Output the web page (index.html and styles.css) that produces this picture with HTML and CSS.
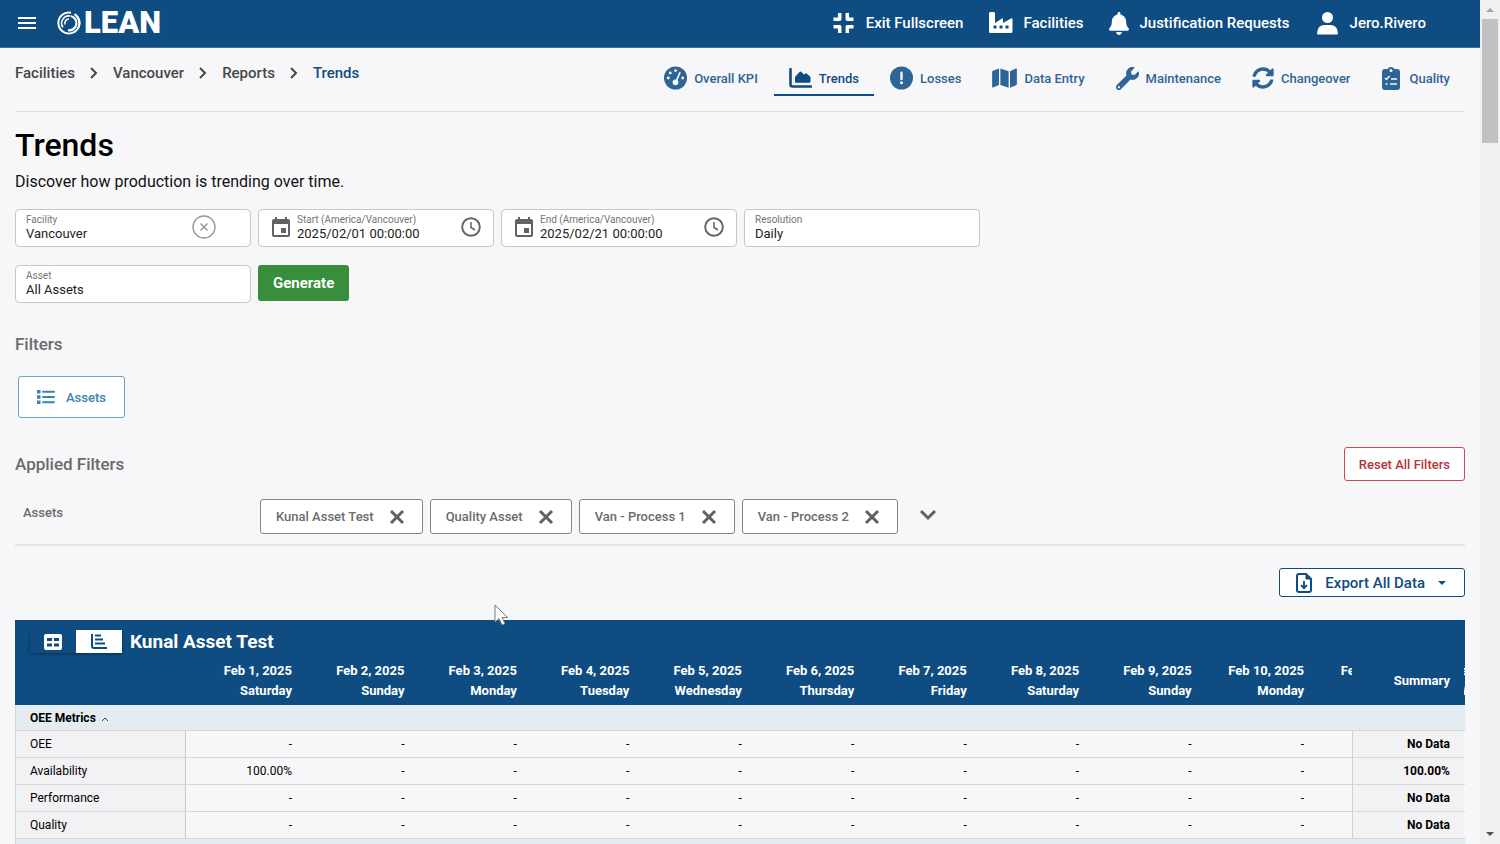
FILE: index.html
```
<!DOCTYPE html>
<html lang="en">
<head>
    <meta charset="UTF-8">
    <meta name="viewport" content="width=device-width, initial-scale=1.0">
    <title>Trends</title>
    <link rel="stylesheet" href="styles.css">
</head>
<body>
    <div class="app">
        <div class="page">
            <header class="topbar">
                <button class="menu-btn" aria-label="Menu">
                    <svg width="18" height="14" viewBox="0 0 18 14"><path d="M0 2h18M0 7h18M0 12h18" stroke="#fff" stroke-width="2"/></svg>
                </button>
                <a class="logo" href="#">
                    <svg width="24" height="24" viewBox="0 0 24 24" fill="none" stroke="#fff">
                        <path d="M14 1.700A10.500 10.500 0 1 0 20.500 6" stroke-width="2"/>
                        <path d="M17.500 3.200A10.500 10.500 0 0 1 21 17.500" stroke-width="2"/>
                        <path d="M13 5A7.200 7.200 0 0 0 6 16.300" stroke-width="1.600"/>
                        <path d="M13.500 5A7.200 7.200 0 0 1 11 19.200" stroke-width="2.200"/>
                        <path d="M8 13.500A4.200 4.200 0 0 1 12 8" stroke-width="1.600"/>
                    </svg>
                    <span>LEAN</span>
                </a>
                <nav class="top-nav">
                    <a href="#">
                        <svg width="24" height="22" viewBox="0 0 24 22" fill="none" stroke="#fff" stroke-width="3.500" stroke-linejoin="round"><path d="M1.500 7.300h6.200V1M21.500 7.300h-6.200V1M1.500 14.700h6.200V21M21.500 14.700h-6.200V21"/></svg>
                        Exit Fullscreen
                    </a>
                    <a href="#">
                        <svg width="24" height="22" viewBox="0 0 24 22"><path fill="#fff" fill-rule="evenodd" d="M1.500 0h3Q6 0 6 1.500V11l7-4.500q1-.5 1 .5v4l8-4.500q1.500-.7 1.500.7V19.500q0 1.500-1.500 1.500h-20.500Q0 21 0 19.500v-18Q0 0 1.500 0zM4.500 13.500v3h3v-3zm6 0v3h3v-3zm6 0v3h3v-3z"/></svg>
                        Facilities
                    </a>
                    <a href="#">
                        <svg width="20" height="23" viewBox="0 0 448 512"><path fill="#fff" d="M224 512c35.320 0 63.970-28.650 63.970-64H160.030c0 35.350 28.650 64 63.970 64zm215.390-149.710c-19.320-20.760-55.470-51.990-55.470-154.290 0-77.700-54.480-139.900-127.940-155.160V32c0-17.670-14.320-32-31.980-32s-31.980 14.330-31.980 32v20.840C118.560 68.100 64.080 130.300 64.080 208c0 102.300-36.150 133.530-55.470 154.290-6 6.450-8.660 14.160-8.610 21.710.11 16.400 12.980 32 32.100 32h383.800c19.120 0 32-15.600 32.100-32 .05-7.550-2.610-15.270-8.610-21.710z"/></svg>
                        Justification Requests
                    </a>
                    <a href="#">
                        <svg width="24" height="24" viewBox="0 0 24 24" fill="#fff"><circle cx="11.500" cy="6.500" r="5.500"/><path d="M1.200 23v-1.500Q1.700 14 8.500 14h6q6.800 0 7.300 7.500V23q0 .5-.5.500H1.700q-.5 0-.5-.5z"/></svg>
                        Jero.Rivero
                    </a>
                </nav>
            </header>

            <main class="content">
                <div class="subheader">
                    <nav class="breadcrumb" aria-label="Breadcrumb">
                        <a href="#">Facilities</a>
                        <svg width="8" height="12" viewBox="0 0 8 12"><path d="M1 1l5 5-5 5"/></svg>
                        <a href="#">Vancouver</a>
                        <svg width="8" height="12" viewBox="0 0 8 12"><path d="M1 1l5 5-5 5"/></svg>
                        <a href="#">Reports</a>
                        <svg width="8" height="12" viewBox="0 0 8 12"><path d="M1 1l5 5-5 5"/></svg>
                        <a href="#" class="current">Trends</a>
                    </nav>
                    <nav class="tabs">
                        <a href="#">
                            <svg width="23" height="24" viewBox="0 0 24 24"><circle cx="12" cy="12" r="12" fill="#2e6596"/><g fill="#f7f6f9"><circle cx="4.500" cy="12" r="1.500"/><circle cx="6.500" cy="6.700" r="1.500"/><circle cx="12" cy="4.300" r="1.500"/><circle cx="19.500" cy="12" r="1.500"/><circle cx="12" cy="16.500" r="3"/></g><path d="M12.500 16L16.500 6.500" stroke="#f7f6f9" stroke-width="1.800" stroke-linecap="round"/></svg>
                            Overall KPI
                        </a>
                        <a href="#" class="active">
                            <svg width="23" height="20" viewBox="0 0 23 20"><path d="M1.500 1v15.500q0 2 2 2H22" fill="none" stroke="#0f4c81" stroke-width="2.600" stroke-linecap="round"/><path fill="#0f4c81" d="M6 14V9l4.500-5q1-.8 2 0l2.500 2.500 1.500-1q.8-.5 1.500.3L21.500 9v5q0 .8-.8.8H6.800Q6 14.800 6 14z"/></svg>
                            Trends
                        </a>
                        <a href="#">
                            <svg width="23" height="24" viewBox="0 0 24 24"><circle cx="12" cy="12" r="12" fill="#2e6596"/><path d="M12 6.500v6.500" stroke="#f7f6f9" stroke-width="2.500" stroke-linecap="round"/><circle cx="12" cy="17" r="1.600" fill="#f7f6f9"/></svg>
                            Losses
                        </a>
                        <a href="#">
                            <svg width="25" height="22" viewBox="0 0 576 512"><path fill="#2e6596" d="M0 117.660v346.320c0 11.320 11.430 19.060 21.940 14.860L160 416V32L20.120 87.950A32.006 32.006 0 0 0 0 117.660zM192 416l192 64V96L192 32v384zM554.060 33.160L416 96v384l139.880-55.950A31.996 31.996 0 0 0 576 394.340V48.020c0-11.320-11.430-19.060-21.940-14.860z"/></svg>
                            Data Entry
                        </a>
                        <a href="#">
                            <svg width="23" height="23" viewBox="0 0 512 512"><path fill="#2e6596" d="M507.730 109.100c-2.240-9.030-13.540-12.090-20.120-5.510l-74.360 74.360-67.880-11.310-11.310-67.880 74.360-74.360c6.620-6.620 3.430-17.900-5.660-20.160-47.380-11.740-99.550.91-136.580 37.930-39.640 39.640-50.550 97.100-34.050 147.200L18.740 402.760c-24.990 24.990-24.990 65.510 0 90.500 24.990 24.990 65.510 24.990 90.500 0l213.210-213.210c50.120 16.710 107.470 5.680 147.370-34.220 37.070-37.070 49.700-89.320 37.910-136.730zM64 472c-13.250 0-24-10.750-24-24 0-13.260 10.750-24 24-24s24 10.740 24 24c0 13.250-10.750 24-24 24z"/></svg>
                            Maintenance
                        </a>
                        <a href="#">
                            <svg width="22" height="22" viewBox="0 0 512 512"><path fill="#2e6596" d="M370.720 133.280C339.458 104.008 298.888 87.962 255.848 88c-77.458.068-144.328 53.178-162.791 126.850-1.344 5.363-6.122 9.150-11.651 9.150H24.103c-7.498 0-13.194-6.807-11.807-14.176C33.933 94.924 134.813 8 256 8c66.448 0 126.791 26.136 171.315 68.685L463.030 40.970C478.149 25.851 504 36.559 504 57.941V192c0 13.255-10.745 24-24 24H345.941c-21.382 0-32.090-25.851-16.971-40.971l41.750-41.749zM32 296h134.059c21.382 0 32.090 25.851 16.971 40.971l-41.750 41.750c31.262 29.273 71.835 45.319 114.876 45.280 77.418-.07 144.315-53.144 162.787-126.849 1.344-5.363 6.122-9.150 11.651-9.150h57.304c7.498 0 13.194 6.807 11.807 14.176C478.067 417.076 377.187 504 256 504c-66.448 0-126.791-26.136-171.315-68.685L48.970 471.030C33.851 486.149 8 475.441 8 454.059V320c0-13.255 10.745-24 24-24z"/></svg>
                            Changeover
                        </a>
                        <a href="#">
                            <svg width="21" height="24" viewBox="0 0 21 24"><path fill="#2e6596" d="M4 3h2.500a4 4 0 0 1 7 0H16q3 0 3 3v15q0 3-3 3H4q-3 0-3-3V6q0-3 3-3z"/><circle cx="10" cy="4.500" r="1.500" fill="#f7f6f9"/><path d="M4 12l1.500 1.500L8.500 10M10 13h6M9 18h7M4.500 18h2" fill="none" stroke="#f7f6f9" stroke-width="1.500"/></svg>
                            Quality
                        </a>
                    </nav>
                </div>

                <h1>Trends</h1>
                <p class="description">Discover how production is trending over time.</p>

                <form class="report-form" onsubmit="return false">
                    <div class="form-row">
                        <div class="field">
                            <div class="field-text">
                                <label for="facility">Facility</label>
                                <input id="facility" type="text" value="Vancouver">
                            </div>
                            <button type="button" class="clear-btn" aria-label="Clear facility">
                                <svg width="24" height="24" viewBox="0 0 24 24" fill="none" stroke="#999"><circle cx="12" cy="12" r="11" stroke-width="1.400"/><path d="M8.500 8.500l7 7M15.500 8.500l-7 7" stroke-width="1.500"/></svg>
                            </button>
                        </div>
                        <div class="field date">
                            <svg width="18" height="20" viewBox="0 0 18 20"><path fill="#626262" fill-rule="evenodd" d="M3 0h2v2h8V0h2v2h1q2 0 2 2v14q0 2-2 2H2q-2 0-2-2V4Q0 2 2 2h1zM2 7v11h14V7zM9 11h5v5H9z"/></svg>
                            <div class="field-text">
                                <label for="start">Start (America/Vancouver)</label>
                                <input id="start" type="text" value="2025/02/01 00:00:00">
                            </div>
                            <button type="button" aria-label="Pick start time">
                                <svg width="20" height="20" viewBox="0 0 20 20" fill="none" stroke="#626262"><circle cx="10" cy="10" r="8.800" stroke-width="1.900"/><path d="M10 5v5.500l4 2.500" stroke-width="1.500"/></svg>
                            </button>
                        </div>
                        <div class="field date">
                            <svg width="18" height="20" viewBox="0 0 18 20"><path fill="#626262" fill-rule="evenodd" d="M3 0h2v2h8V0h2v2h1q2 0 2 2v14q0 2-2 2H2q-2 0-2-2V4Q0 2 2 2h1zM2 7v11h14V7zM9 11h5v5H9z"/></svg>
                            <div class="field-text">
                                <label for="end">End (America/Vancouver)</label>
                                <input id="end" type="text" value="2025/02/21 00:00:00">
                            </div>
                            <button type="button" aria-label="Pick end time">
                                <svg width="20" height="20" viewBox="0 0 20 20" fill="none" stroke="#626262"><circle cx="10" cy="10" r="8.800" stroke-width="1.900"/><path d="M10 5v5.500l4 2.500" stroke-width="1.500"/></svg>
                            </button>
                        </div>
                        <div class="field">
                            <div class="field-text">
                                <label for="resolution">Resolution</label>
                                <select id="resolution"><option>Daily</option></select>
                            </div>
                        </div>
                    </div>
                    <div class="form-row">
                        <div class="field">
                            <div class="field-text">
                                <label for="asset">Asset</label>
                                <select id="asset"><option>All Assets</option></select>
                            </div>
                        </div>
                        <button type="submit" class="generate-btn">Generate</button>
                    </div>
                </form>

                <h2>Filters</h2>
                <button class="assets-btn">
                    <svg width="18" height="14" viewBox="0 0 18 14" fill="#3a84ad"><path d="M0 0h3.500v3.500H0zM0 5.200h3.500v3.500H0zM0 10.500h3.500V14H0z"/><path d="M6 1.700h11M6 7h11M6 12.300h11" stroke="#3a84ad" stroke-width="2" stroke-linecap="round"/></svg>
                    Assets
                </button>

                <div class="applied-head">
                    <h2>Applied Filters</h2>
                    <button class="reset-btn">Reset All Filters</button>
                </div>
                <div class="applied-row">
                    <span class="applied-label">Assets</span>
                    <div class="chips">
                        <button class="chip">Kunal Asset Test <svg width="16" height="16" viewBox="0 0 16 16"><path d="M2 2l12 12M14 2L2 14"/></svg></button>
                        <button class="chip">Quality Asset <svg width="16" height="16" viewBox="0 0 16 16"><path d="M2 2l12 12M14 2L2 14"/></svg></button>
                        <button class="chip">Van - Process 1 <svg width="16" height="16" viewBox="0 0 16 16"><path d="M2 2l12 12M14 2L2 14"/></svg></button>
                        <button class="chip">Van - Process 2 <svg width="16" height="16" viewBox="0 0 16 16"><path d="M2 2l12 12M14 2L2 14"/></svg></button>
                        <button class="more-btn" aria-label="Show more">
                            <svg width="18" height="12" viewBox="0 0 18 12"><path d="M2 2l7 7 7-7"/></svg>
                        </button>
                    </div>
                </div>

                <div class="export-row">
                    <button class="export-btn">
                        <svg width="16" height="20" viewBox="0 0 16 20" fill="none" stroke="#0f4c81" stroke-width="2"><path d="M3 1h7l5 5v11q0 2-2 2H3q-2 0-2-2V3q0-2 2-2z"/><path d="M10 1v5h5z" fill="#0f4c81" stroke-width="1"/><path d="M8 8v7M5 12.200l3 3 3-3" stroke-width="1.800"/></svg>
                        Export All Data
                        <svg width="8" height="4" viewBox="0 0 8 4"><path d="M0 0h8L4 4z" fill="#0f4c81"/></svg>
                    </button>
                </div>

                <section class="asset-card">
                    <div class="asset-title">
                        <div class="view-toggle">
                            <button aria-label="Table view">
                                <svg width="18" height="16" viewBox="0 0 18 16"><path fill="#fff" fill-rule="evenodd" d="M2 0h14q2 0 2 2v12q0 2-2 2H2q-2 0-2-2V2Q0 0 2 0zM3 4v3h5V4zm7 0v3h5V4zM3 9.500v3h5v-3zm7 0v3h5v-3z"/></svg>
                            </button>
                            <button class="on" aria-label="Chart view">
                                <svg width="16" height="15" viewBox="0 0 16 15" fill="none" stroke="#0f4c81" stroke-width="2"><path d="M1 0v12q0 2 2 2h13M4 1.500h6M4 5.500h8M4 9.500h10"/></svg>
                            </button>
                        </div>
                        <h3>Kunal Asset Test</h3>
                    </div>
                    <div class="table-wrap">
                        <table>
                            <colgroup>
                                <col class="col-name"><col class="col-first">
                                <col><col><col><col><col><col><col><col><col><col><col>
                                <col class="col-summary">
                            </colgroup>
                            <thead>
                                <tr>
                                    <th></th>
                                    <th>Feb 1, 2025<br>Saturday</th>
                                    <th>Feb 2, 2025<br>Sunday</th>
                                    <th>Feb 3, 2025<br>Monday</th>
                                    <th>Feb 4, 2025<br>Tuesday</th>
                                    <th>Feb 5, 2025<br>Wednesday</th>
                                    <th>Feb 6, 2025<br>Thursday</th>
                                    <th>Feb 7, 2025<br>Friday</th>
                                    <th>Feb 8, 2025<br>Saturday</th>
                                    <th>Feb 9, 2025<br>Sunday</th>
                                    <th>Feb 10, 2025<br>Monday</th>
                                    <th>Feb 11, 2025<br>Tuesday</th>
                                    <th>Feb 12, 2025<br>Wednesday</th>
                                    <th class="summary">Summary</th>
                                </tr>
                            </thead>
                            <tbody>
                                <tr class="group"><th colspan="14">OEE Metrics <svg width="8" height="5" viewBox="0 0 8 5"><path d="M1 4l3-3 3 3" fill="none" stroke="#444"/></svg></th></tr>
                                <tr><th>OEE</th><td>-</td><td>-</td><td>-</td><td>-</td><td>-</td><td>-</td><td>-</td><td>-</td><td>-</td><td>-</td><td></td><td></td><td class="summary">No Data</td></tr>
                                <tr><th>Availability</th><td>100.00%</td><td>-</td><td>-</td><td>-</td><td>-</td><td>-</td><td>-</td><td>-</td><td>-</td><td>-</td><td></td><td></td><td class="summary">100.00%</td></tr>
                                <tr><th>Performance</th><td>-</td><td>-</td><td>-</td><td>-</td><td>-</td><td>-</td><td>-</td><td>-</td><td>-</td><td>-</td><td></td><td></td><td class="summary">No Data</td></tr>
                                <tr><th>Quality</th><td>-</td><td>-</td><td>-</td><td>-</td><td>-</td><td>-</td><td>-</td><td>-</td><td>-</td><td>-</td><td></td><td></td><td class="summary">No Data</td></tr>
                                <tr class="group"><th colspan="14"></th></tr>
                            </tbody>
                        </table>
                    </div>
                </section>
            </main>
        </div>

        <div class="scrollbar">
            <svg width="8" height="4" viewBox="0 0 8 4"><path d="M0 4h8L4 0z" fill="#a3a3a3"/></svg>
            <div class="thumb"></div>
            <svg class="down" width="8" height="4" viewBox="0 0 8 4"><path d="M0 0h8L4 4z" fill="#505050"/></svg>
        </div>
    </div>

    <svg class="cursor" width="15" height="22" viewBox="0 0 15 22"><path d="M1 1v17l4-3.500 3 6.500 3-1.300-3-6.200h5.500z" fill="#fff" stroke="#777"/></svg>
</body>
</html>
```
FILE: styles.css
```
* {
    box-sizing: border-box;
}
body {
    margin: 0;
    font-family: Roboto, Arial, sans-serif;
    font-size: 13px;
    color: #222;
    background: #f7f6f9;
}
a {
    text-decoration: none;
    color: inherit;
}
button {
    font-family: inherit;
    font-weight: 500;
    cursor: pointer;
}
svg {
    flex-shrink: 0;
}
h1, h2, h3, p {
    margin: 0;
}
.app {
    display: flex;
    height: 100vh;
    overflow: hidden;
}
.page {
    flex: 1;
    min-width: 0;
}

/* top bar */
.topbar {
    display: flex;
    align-items: center;
    height: 48px;
    padding: 0 54px 1px 18px;
    background: #0f4c81;
    border-bottom: 1px solid #3f6f99;
    color: white;
}
.menu-btn {
    display: flex;
    padding: 0;
    margin-right: 21px;
    background: none;
    border: none;
}
.logo {
    display: flex;
    align-items: center;
    gap: 3px;
    font-size: 31px;
    line-height: 32px;
    font-weight: 900;
}
.top-nav {
    display: flex;
    gap: 26px;
    margin-left: auto;
    font-size: 15px;
    font-weight: 500;
}
.top-nav a {
    display: flex;
    align-items: center;
    gap: 10px;
}

/* breadcrumb and tabs */
.content {
    padding: 0 15px;
}
.subheader {
    display: flex;
    justify-content: space-between;
    height: 64px;
    border-bottom: 1px solid #dddce0;
}
.breadcrumb {
    display: flex;
    align-items: center;
    gap: 15px;
    height: 50px;
    font-size: 15px;
    font-weight: 500;
    color: #484848;
}
.breadcrumb path {
    fill: none;
    stroke: #484848;
    stroke-width: 2;
}
.breadcrumb .current {
    color: #0f4c81;
}
.tabs {
    display: flex;
    gap: 1px;
    height: 48px;
    font-weight: 500;
    color: #2e6596;
}
.tabs a {
    display: flex;
    align-items: center;
    gap: 7px;
    padding: 14px 15px 0;
    border-bottom: 2px solid transparent;
}
.tabs .active {
    color: #0f4c81;
    border-color: #0f4c81;
}

h1 {
    margin-top: 14px;
    font-size: 32px;
    line-height: 38px;
    font-weight: 500;
    color: black;
}
.description {
    margin: 8px 0 17px;
    font-size: 16px;
    line-height: 20px;
    color: #111;
}

/* report form */
.report-form {
    display: flex;
    flex-direction: column;
    gap: 18px;
}
.form-row {
    display: flex;
    gap: 7px;
}
.field {
    display: flex;
    align-items: center;
    gap: 7px;
    width: 236px;
    height: 38px;
    padding: 0 10px 2px;
    background: white;
    border: 1px solid #c8c7ca;
    border-radius: 4px;
}
.field.date {
    padding: 0 12px 2px 13px;
}
.field-text {
    flex: 1;
    min-width: 0;
    display: flex;
    flex-direction: column;
}
.field label {
    font-size: 10px;
    line-height: 12px;
    color: #757575;
    white-space: nowrap;
}
.field input, .field select {
    width: 100%;
    height: 15px;
    padding: 0;
    border: none;
    outline: none;
    appearance: none;
    background: none;
    font-family: inherit;
    font-size: 13px;
    line-height: 15px;
    color: #222;
}
.field button {
    display: flex;
    padding: 0;
    border: none;
    background: none;
}
.field .clear-btn {
    margin-right: 24px;
}
.generate-btn {
    height: 36px;
    padding: 0 15px;
    border: none;
    border-radius: 3px;
    background: #388e3c;
    color: white;
    font-size: 15px;
    font-weight: 700;
}

/* filters */
h2 {
    font-size: 17px;
    line-height: 20px;
    font-weight: 500;
    color: #6b6b6b;
}
.report-form + h2 {
    margin-top: 31px;
}
.assets-btn {
    display: flex;
    align-items: center;
    gap: 11px;
    height: 42px;
    margin: 22px 0 0 3px;
    padding: 0 18px;
    border: 1px solid #6fa3c2;
    border-radius: 3px;
    background: white;
    color: #3a84ad;
    font-size: 13px;
}
.applied-head {
    display: flex;
    justify-content: space-between;
    align-items: center;
    margin-top: 29px;
}
.reset-btn {
    height: 34px;
    padding: 0 14px;
    border: 1px solid #c94a50;
    border-radius: 3px;
    background: white;
    color: #b93238;
    font-size: 13px;
}
.applied-row {
    display: flex;
    padding: 18px 0 10px 8px;
    border-bottom: 2px solid #e4e3e6;
    color: #6b6b6b;
    font-weight: 500;
}
.applied-label {
    width: 237px;
    line-height: 28px;
}
.chips {
    display: flex;
    gap: 7px;
}
.chip {
    display: flex;
    align-items: center;
    gap: 15px;
    height: 35px;
    padding: 0 17px 0 15px;
    border: 1px solid #858585;
    border-radius: 3px;
    background: white;
    color: #6b6b6b;
    font-size: 13px;
}
.chip path, .more-btn path {
    fill: none;
    stroke: #626262;
    stroke-width: 3;
}
.more-btn {
    padding: 0 14px;
    border: none;
    background: none;
}

/* export */
.export-row {
    display: flex;
    justify-content: flex-end;
    margin: 22px 0 23px;
}
.export-btn {
    display: flex;
    align-items: center;
    gap: 13px;
    height: 29px;
    padding: 0 18px 0 16px;
    border: 1px solid #0f4c81;
    border-radius: 3px;
    background: white;
    color: #0f4c81;
    font-size: 15px;
}

/* asset table */
.asset-card {
    color: black;
}
.asset-title {
    display: flex;
    align-items: center;
    gap: 8px;
    height: 41px;
    padding: 2px 15px 0;
    background: #0f4c81;
    color: white;
}
.asset-title h3 {
    font-size: 19px;
    line-height: 24px;
    font-weight: 700;
}
.view-toggle {
    display: flex;
    box-shadow: 0 1px 3px rgba(0, 0, 0, 0.4);
}
.view-toggle button {
    display: flex;
    align-items: center;
    justify-content: center;
    width: 46px;
    height: 23px;
    padding: 0;
    border: none;
    background: #0f4c81;
}
.view-toggle .on {
    background: white;
}
.table-wrap {
    overflow: hidden;
}
table {
    width: 1641px;
    table-layout: fixed;
    border-collapse: separate;
    border-spacing: 0;
    font-size: 12px;
}
.col-name {
    width: 171px;
}
.col-first {
    width: 121px;
}
.col-summary {
    width: 112px;
}
th, td {
    height: 27px;
    padding: 0 15px;
    text-align: right;
    white-space: nowrap;
    border-bottom: 1px solid #d6d5d8;
}
thead th {
    height: 44px;
    padding-bottom: 4px;
    border: none;
    background: #0f4c81;
    color: white;
    font-size: 13px;
    line-height: 20px;
    font-weight: 700;
}
tbody th {
    padding-left: 14px;
    text-align: left;
    font-weight: 400;
    background: #f2f1f4;
    border-left: 1px solid #d6d5d8;
    border-right: 1px solid #c8c7ca;
}
tbody .group th {
    height: 26px;
    background: #e3edf1;
    font-weight: 700;
}
.group svg {
    margin-left: 2px;
}
.summary {
    position: sticky;
    right: 1px;
    padding-right: 14px;
    background: #f2f1f4;
    font-weight: 700;
}
tbody .summary {
    border-left: 1px solid #d0cfd2;
}
thead .summary {
    background: #0f4c81;
}

/* page scrollbar */
.scrollbar {
    display: flex;
    flex-direction: column;
    align-items: center;
    width: 20px;
    padding: 8px 0;
    background: #f0eff1;
}
.thumb {
    width: 16px;
    height: 124px;
    margin-top: 7px;
    background: #c1c0c2;
}
.scrollbar .down {
    margin-top: auto;
}
.cursor {
    position: absolute;
    left: 494px;
    top: 604px;
}
```
